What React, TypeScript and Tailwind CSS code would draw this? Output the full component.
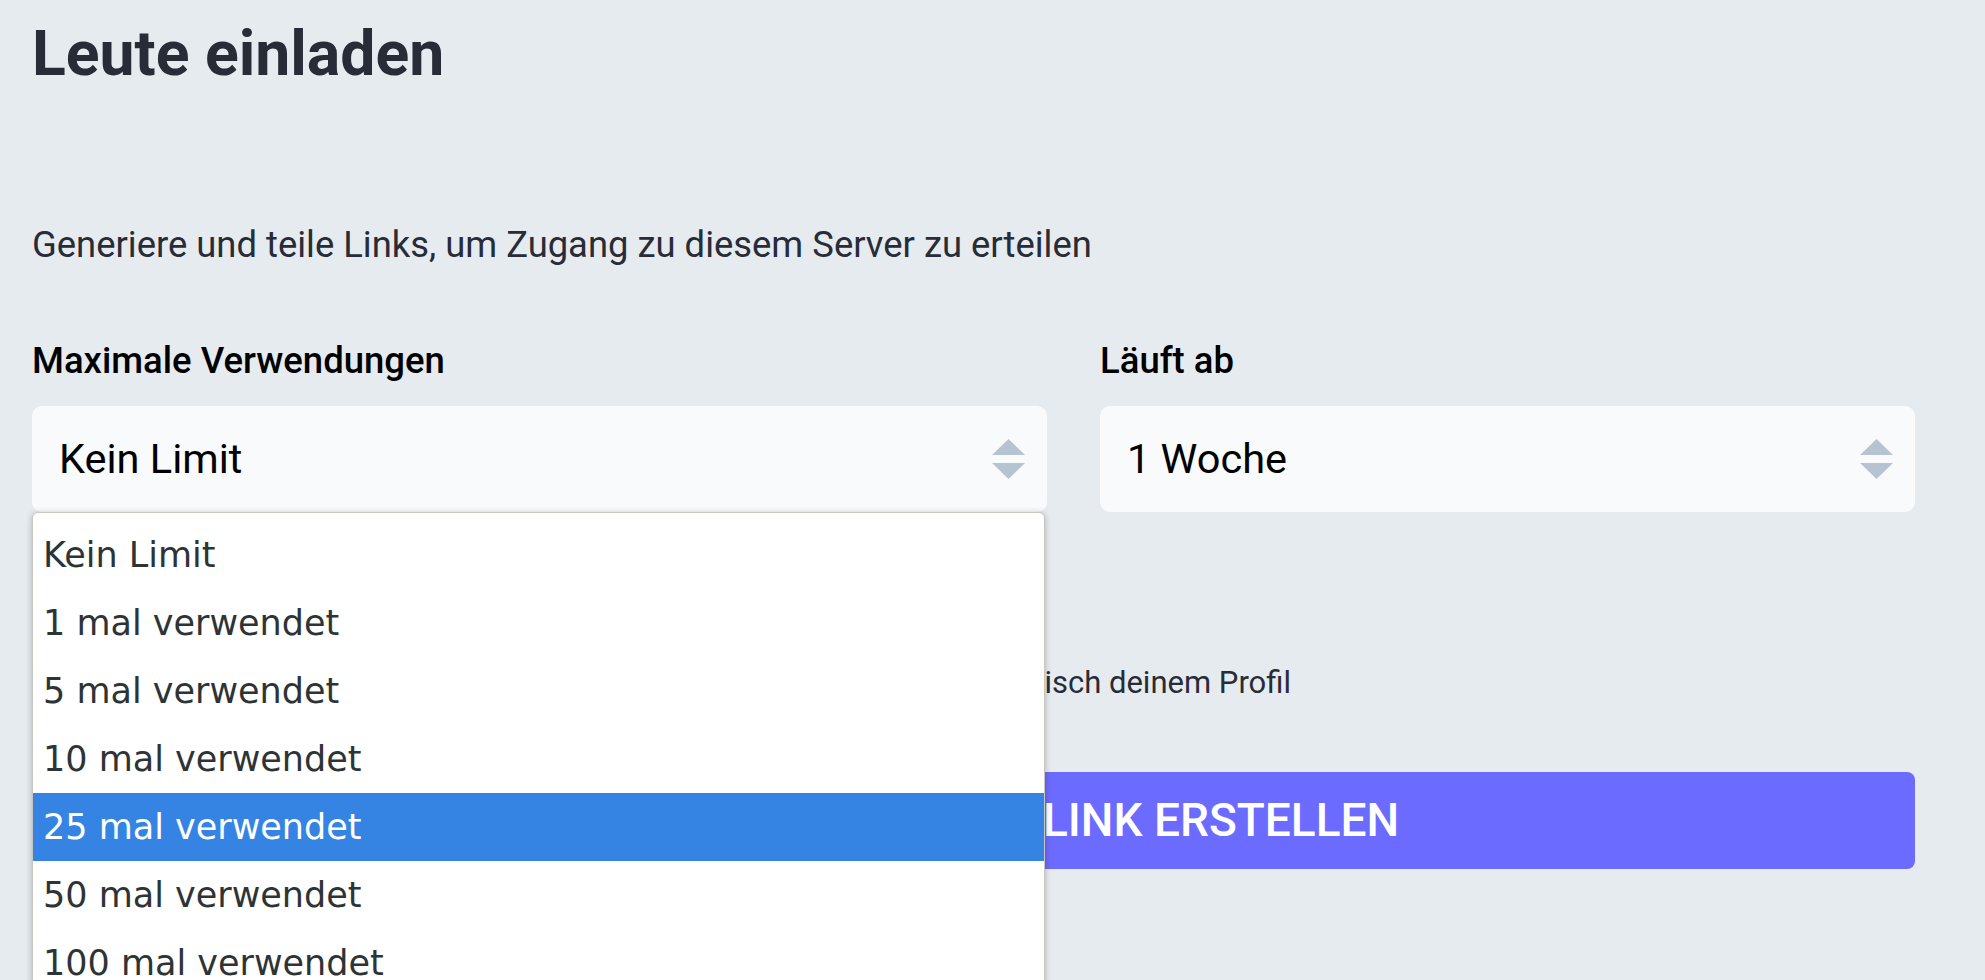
import { useState } from "react";

const USE_OPTIONS = [
  "Kein Limit",
  "1 mal verwendet",
  "5 mal verwendet",
  "10 mal verwendet",
  "25 mal verwendet",
  "50 mal verwendet",
  "100 mal verwendet",
];

function UpDownArrows() {
  return (
    <svg width="33" height="40" viewBox="0 0 33 40" className="shrink-0">
      <polygon points="16.5,0 33,16 0,16" fill="#b6c4d1" />
      <polygon points="0,24 33,24 16.5,40" fill="#b6c4d1" />
    </svg>
  );
}

function SelectBox({ value }: { value: string }) {
  return (
    <div className="flex h-[106px] items-center justify-between rounded-[10px] bg-[#f9fafb] pl-[27px] pr-[22px]">
      <span className="text-[41.5px] leading-[48px] text-black">{value}</span>
      <UpDownArrows />
    </div>
  );
}

export default function App() {
  const [maxUses] = useState("Kein Limit");
  const [hovered, setHovered] = useState(4);

  return (
    <div className="h-[980px] w-full overflow-hidden bg-[#e6ebf0] pl-[32px] font-['Roboto',sans-serif]">
      <div className="w-[1883px]">
        <h1 className="pt-[18px] text-[62.5px] font-bold leading-[72px] text-[#282c37]">
          Leute einladen
        </h1>

        <p className="mt-[134px] text-[36.4px] leading-[42px] text-[#282c37]">
          Generiere und teile Links, um Zugang zu diesem Server zu erteilen
        </p>

        <div className="mt-[74px] grid grid-cols-[1015px_815px] gap-x-[53px]">
          <div className="relative">
            <label className="block text-[36.5px] font-medium leading-[42px] text-black">
              Maximale Verwendungen
            </label>
            <div className="mt-[24px]">
              <SelectBox value={maxUses} />
            </div>
            <ul className="absolute left-0 top-full z-10 w-[1013px] rounded-[6px] border border-[#c9c6c2] bg-white pt-[8px] font-['DejaVu_Sans',sans-serif] shadow-[0_1px_6px_rgba(0,0,0,0.25)]">
              {USE_OPTIONS.map((opt, i) => (
                <li
                  key={opt}
                  onMouseEnter={() => setHovered(i)}
                  className={
                    i === hovered
                      ? "h-[68px] bg-[#3584e4] pl-[10px] text-[35px] leading-[68px] text-white"
                      : "h-[68px] pl-[10px] text-[35px] leading-[68px] text-[#2e3436]"
                  }
                >
                  {opt}
                </li>
              ))}
            </ul>
          </div>
          <div>
            <label className="block text-[36.5px] font-medium leading-[42px] text-black">
              Läuft ab
            </label>
            <div className="mt-[24px]">
              <SelectBox value="1 Woche" />
            </div>
          </div>
        </div>

        <div className="mt-[40px]">
          <label className="flex items-center gap-4 text-[36.5px] font-medium leading-[42px] text-black">
            <span className="h-[36px] w-[36px] rounded-[6px] border-2 border-[#b6c4d1] bg-white" />
            Zum Folgen deines Profils einladen
          </label>
          <p className="mt-[70px] pl-[80px] text-[31px] leading-[38px] text-[#282c37]">
            Personen, die sich über diese Einladung registrieren, folgen automatisch deinem Profil
          </p>
        </div>

        <button
          type="button"
          className="mt-[70px] flex h-[97px] w-full items-center rounded-[8px] bg-[#6c6bff] pl-[1011px] text-[46px] font-medium uppercase text-white"
        >
          Link erstellen
        </button>
      </div>
    </div>
  );
}
